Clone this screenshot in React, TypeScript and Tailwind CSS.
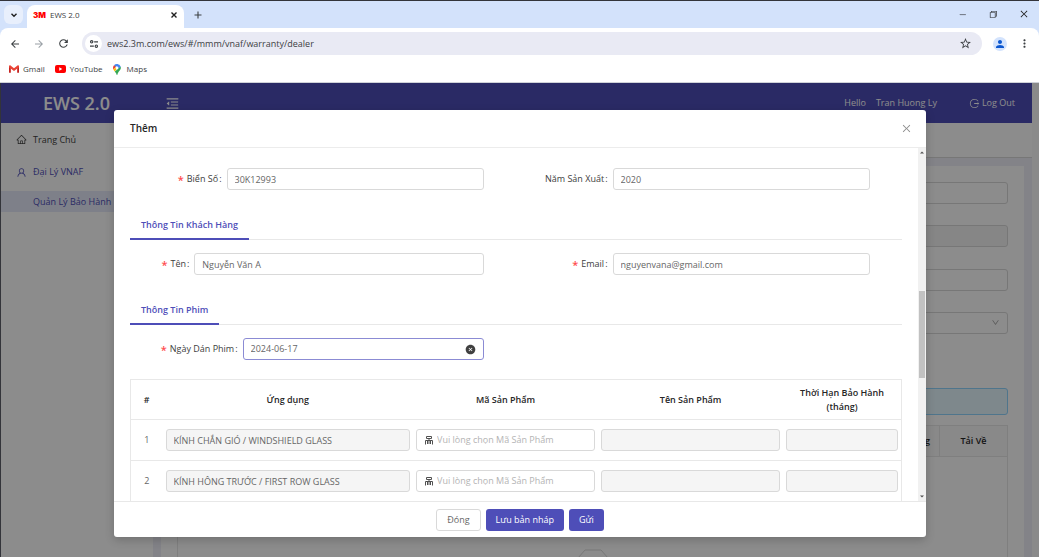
import React, { useState } from "react";
import {
  AiFillCloseCircle,
  AiOutlineClose,
  AiOutlineDown,
  AiOutlineHome,
  AiOutlineLogout,
  AiOutlineMenuFold,
  AiOutlineUser,
} from "react-icons/ai";
import {
  MdArrowBack,
  MdArrowForward,
  MdMoreVert,
  MdOutlineStarBorder,
  MdPerson,
  MdRefresh,
} from "react-icons/md";
import { VscChromeClose, VscChromeMinimize, VscChromeRestore } from "react-icons/vsc";

const inputBase =
  "block h-[22px] w-full min-w-0 rounded-[3px] border border-[#d9d9d9] px-[7px] text-[#666666] outline-none";

function SiteSettingsIcon() {
  return (
    <svg viewBox="0 0 12 12" className="size-[10px]" fill="none" stroke="#3c4043" strokeWidth="1.4">
      <circle cx="3.2" cy="3.4" r="1.4" />
      <path d="M6.2 3.4h4.6M1.2 8.6h4.6" />
      <circle cx="8.8" cy="8.6" r="1.4" />
    </svg>
  );
}

function ProductTreeIcon() {
  return (
    <svg viewBox="0 0 10 10" className="size-[10px] shrink-0" fill="none" stroke="#505050">
      <path d="M2.500 1.500h5v2h-5zM5 3.500v5.500M1.500 9.500V5.500h7V9.500M3.500 5.500v3.500M6.500 5.500v3.500" />
    </svg>
  );
}

function GmailIcon() {
  return (
    <svg viewBox="0 0 22 16" className="h-2 w-[10px]">
      <path d="M0 2v14h4V6z" fill="#c5221f" />
      <path d="M22 2v14h-4V6z" fill="#c5221f" />
      <path d="M0 2C0 0 2 -1 4 1l7 5.5L18 1c2-2 4-1 4 1v2l-11 8.500L0 4z" fill="#ea4335" />
    </svg>
  );
}

function YouTubeIcon() {
  return (
    <svg viewBox="0 0 22 16" className="h-2 w-[11px]">
      <rect width="22" height="16" rx="4" fill="#ff0000" />
      <path d="M8.500 4.500v7l6-3.500z" fill="#fff" />
    </svg>
  );
}

function MapsIcon() {
  return (
    <svg viewBox="0 0 16 22" className="h-[11px] w-2">
      <path d="M8 0a8 8 0 0 1 7.500 5.500L8 14z" fill="#4285f4" />
      <path d="M8 0a8 8 0 0 0-6 2.600L6 7l4-6.700A8 8 0 0 0 8 0z" fill="#4285f4" />
      <path d="M2 2.600A8 8 0 0 0 .8 11L6 6z" fill="#ea4335" />
      <path d="M.8 11c.6 1.400 1.600 2.600 2.700 3.900L11 6 6 6z" fill="#fbbc04" />
      <path d="M15.500 5.500C17 12 10 14 8.700 21.400c-.2.800-1.200.8-1.400 0C6.800 18.600 5 16.700 3.500 14.900z" fill="#34a853" />
      <circle cx="8" cy="8" r="2.800" fill="#fff" />
    </svg>
  );
}

function BrowserChrome() {
  return (
    <div className="shrink-0 bg-[#d3e2fb] text-[#3c4043]">
      <div className="flex h-7 items-end border-t border-[#33343a] pl-1">
        <button aria-label="Search tabs" className="mb-1 flex size-[19px] items-center justify-center rounded-md bg-[#e8effc]">
          <svg viewBox="0 0 8 8" className="size-2" fill="none" stroke="#1f1f1f" strokeWidth="1.4">
            <path d="M1.500 2.800 4 5.300l2.500-2.500" />
          </svg>
        </button>
        <div className="ml-1 flex h-[23px] w-[157px] items-center rounded-t-lg bg-white pr-[6px] pb-[4px] pl-[6px]">
          <span className="font-[Inter] text-[8px] font-black text-[#ff0000]">3M</span>
          <span className="ml-[4px] flex-1 text-[8px]">EWS 2.0</span>
          <button aria-label="Close tab">
            <svg viewBox="0 0 8 8" className="size-2" stroke="#1f1f1f" strokeWidth="1.400">
              <path d="m1.500 1.500 5 5m0-5-5 5" />
            </svg>
          </button>
        </div>
        <button aria-label="New tab" className="mb-[9px] ml-[10px]">
          <svg viewBox="0 0 8 8" className="size-2" stroke="#3c4043" strokeWidth="1.100">
            <path d="M4 .5v7M.5 4h7" />
          </svg>
        </button>
        <div className="mb-[9px] ml-auto flex items-center gap-[21px] pr-[10px] text-[#1f1f1f]">
          <button aria-label="Minimize"><VscChromeMinimize className="size-[9px]" /></button>
          <button aria-label="Restore"><VscChromeRestore className="size-[10px]" /></button>
          <button aria-label="Close window"><VscChromeClose className="size-[10px]" /></button>
        </div>
      </div>
      <div className="flex h-[31px] items-center rounded-t-lg bg-white pl-[9px]">
        <button aria-label="Back"><MdArrowBack className="size-3" /></button>
        <button aria-label="Forward" className="ml-3 text-[#9aa0a6]"><MdArrowForward className="size-3" /></button>
        <button aria-label="Reload" className="ml-3"><MdRefresh className="size-[13px]" /></button>
        <div className="ml-3 flex h-[23px] flex-1 items-center rounded-full bg-[#e9eaf4] pr-[10px] pl-[3px]">
          <span className="flex size-[17px] items-center justify-center rounded-full bg-white">
            <SiteSettingsIcon />
          </span>
          <input
            aria-label="Address"
            defaultValue="ews2.3m.com/ews/#/mmm/vnaf/warranty/dealer"
            className="ml-[5px] min-w-0 flex-1 bg-transparent text-[9px] outline-none"
          />
          <button aria-label="Bookmark"><MdOutlineStarBorder className="size-[13px]" /></button>
        </div>
        <button aria-label="Profile" className="ml-[11px] flex size-[14px] items-center justify-center rounded-full bg-[#d3e3fd] text-[#0b57d0]">
          <MdPerson className="size-3" />
        </button>
        <button aria-label="Menu" className="mr-2 ml-[11px]"><MdMoreVert className="size-[13px]" /></button>
      </div>
      <nav className="flex h-6 items-center gap-[10px] border-b border-[#cfd2d8] bg-white pb-[3px] pl-[9px] text-[8px]">
        <a href="#gmail" className="flex items-center gap-1"><GmailIcon />Gmail</a>
        <a href="#youtube" className="flex items-center gap-1"><YouTubeIcon />YouTube</a>
        <a href="#maps" className="flex items-center gap-[6px]"><MapsIcon />Maps</a>
      </nav>
    </div>
  );
}

function BackgroundPage() {
  return (
    <div className="flex h-full bg-white">
      <div className="flex min-w-0 flex-1 flex-col">
        <header className="flex h-10 shrink-0 items-center bg-[#4e4eb8] text-[9px] text-white">
          <div className="flex w-[153px] justify-center text-[18px] font-semibold">EWS 2.0</div>
          <button aria-label="Collapse menu" className="ml-3">
            <AiOutlineMenuFold className="size-[15px]" />
          </button>
          <span className="ml-auto">Hello</span>
          <span className="ml-[10px]">Tran Huong Ly</span>
          <a href="#logout" className="mr-[17px] ml-8 flex items-center gap-[2px]">
            <AiOutlineLogout className="size-[11px]" />
            Log Out
          </a>
        </header>
        <div className="flex min-h-0 flex-1">
          <nav className="w-[153px] shrink-0 text-[9px] text-[#404040]">
            <a href="#home" className="flex h-[33px] items-center gap-[6px] pl-4">
              <AiOutlineHome className="size-[11px]" />
              Trang Chủ
            </a>
            <a href="#dealer" className="flex h-8 items-center gap-[6px] pl-4 text-[#4e4eb8]">
              <AiOutlineUser className="size-[11px]" />
              Đại Lý VNAF
            </a>
            <a href="#warranty" className="mt-[3px] flex h-[21px] items-center bg-[#e6eafa] pl-[33px] text-[#4e4eb8]">
              Quản Lý Bảo Hành
            </a>
          </nav>
          <main className="flex min-w-0 flex-1 flex-col bg-[#eeeef8] pr-2 pl-2">
            <div className="-mx-2 h-[35px] shrink-0 border-b border-[#d9d9d9] bg-white" />
            <div className="mt-2 flex min-h-0 flex-1 flex-col bg-white px-4 pt-4">
              <div className="flex h-[152px] flex-col justify-between">
                <input aria-label="Số khung" className={`${inputBase}`} />
                <input aria-label="Dòng xe" disabled className={`${inputBase} bg-[#f5f5f5]`} />
                <input aria-label="Số hợp đồng" className={`${inputBase}`} />
                <div className="relative">
                  <select aria-label="Trạng thái" className={`${inputBase} appearance-none`} />
                  <AiOutlineDown className="absolute top-[6px] right-2 size-[9px] text-[#a0a0a0]" />
                </div>
              </div>
              <div className="mt-[54px] h-[27px] shrink-0 rounded-[3px] border border-[#91d5ff] bg-[#e6f7ff]" />
              <div className="mt-[10px] flex min-h-0 flex-1 flex-col border-x border-t border-[#e8e8e8]">
                <div className="flex h-[31px] shrink-0 items-center border-b border-[#e8e8e8] bg-[#fafafa] text-[9px] font-semibold text-[#262626]">
                  <span className="flex-1 pr-[9px] text-right">Nội Dung</span>
                  <span className="flex h-full w-[68px] items-center justify-center border-l border-[#e8e8e8]">Tải Về</span>
                </div>
                <svg viewBox="0 0 32 24" className="mx-auto mt-[92px] h-6 w-8 shrink-0" fill="none" stroke="#d9d9d9">
                  <path d="M1 9 8 1h16l7 8v13H1z" />
                </svg>
              </div>
            </div>
          </main>
        </div>
      </div>
      <div className="w-[7px] shrink-0 bg-[#fcfcfc]" />
    </div>
  );
}

type FieldProps = {
  id: string;
  label: string;
  required?: boolean;
  columns: string;
  children: React.ReactNode;
};

function Field({ id, label, required, columns, children }: FieldProps) {
  return (
    <div className={`grid h-[22px] items-center ${columns}`}>
      <label htmlFor={id} className="flex items-center justify-end pr-[5px] whitespace-nowrap text-[#404040]">
        {required && <span className="mt-px mr-[3px] text-[11px] leading-none font-semibold text-[#ff4d4f]">*</span>}
        {label}
        <span className="ml-px">:</span>
      </label>
      {children}
    </div>
  );
}

function SectionTab({ title }: { title: string }) {
  return (
    <div className="flex h-7 border-b border-[#e8e8e8]">
      <h3 className="-mb-px flex items-center border-b-2 border-[#4e4eb8] px-[11px] font-semibold text-[#4e4eb8]">
        {title}
      </h3>
    </div>
  );
}

const applications = ["KÍNH CHẮN GIÓ / WINDSHIELD GLASS", "KÍNH HÔNG TRƯỚC / FIRST ROW GLASS"];

function FilmTable() {
  return (
    <table className="mt-[19px] w-full table-fixed border-collapse border border-[#e8e8e8]">
      <colgroup>
        <col className="w-8" />
        <col className="w-[32.5%]" />
        <col className="w-[24%]" />
        <col className="w-[24%]" />
        <col />
      </colgroup>
      <thead>
        <tr className="h-10 border-b border-[#e8e8e8] leading-[14px] text-[#262626]">
          <th className="font-semibold">#</th>
          <th className="font-semibold">Ứng dụng</th>
          <th className="font-semibold">Mã Sản Phẩm</th>
          <th className="font-semibold">Tên Sản Phẩm</th>
          <th className="font-semibold">
            Thời Hạn Bảo Hành
            <br />
            (tháng)
          </th>
        </tr>
      </thead>
      <tbody>
        {applications.map((name, i) => (
          <tr key={name} className="h-[41px] border-b border-[#e8e8e8]">
            <td className="text-center text-[#666666]">{i + 1}</td>
            <td className="px-[3px]">
              <input aria-label={`Ứng dụng ${i + 1}`} disabled defaultValue={name} className={`${inputBase} bg-[#f5f5f5]`} />
            </td>
            <td className="px-[3px]">
              <div className="flex h-[22px] items-center gap-[3px] rounded-[3px] border border-[#d9d9d9] bg-white px-[7px]">
                <ProductTreeIcon />
                <input
                  aria-label={`Mã Sản Phẩm ${i + 1}`}
                  placeholder="Vui lòng chọn Mã Sản Phẩm"
                  className="w-full min-w-0 outline-none placeholder:text-[#b4b4b4]"
                />
              </div>
            </td>
            <td className="px-[3px]">
              <input aria-label={`Tên Sản Phẩm ${i + 1}`} disabled className={`${inputBase} bg-[#f5f5f5]`} />
            </td>
            <td className="px-[3px]">
              <input aria-label={`Thời Hạn Bảo Hành ${i + 1}`} disabled className={`${inputBase} bg-[#f5f5f5]`} />
            </td>
          </tr>
        ))}
      </tbody>
    </table>
  );
}

function WarrantyDialog() {
  const [date, setDate] = useState("2024-06-17");
  return (
    <div
      role="dialog"
      aria-labelledby="dialog-title"
      className="flex h-full flex-col overflow-hidden rounded-[3px] bg-white text-[9px] shadow-[0_3px_10px_rgba(0,0,0,0.2)]"
    >
      <div className="flex h-[38px] shrink-0 items-center justify-between border-b border-[#ececec] px-4">
        <h2 id="dialog-title" className="text-[10px] font-semibold text-[#262626]">Thêm</h2>
        <button aria-label="Close" className="text-[#8c8c8c]">
          <AiOutlineClose className="mr-[-2px] size-[11px]" />
        </button>
      </div>
      <div className="flex min-h-0 flex-1">
        <form className="min-w-0 flex-1 overflow-hidden px-4 pt-5">
          <div className="grid grid-cols-2">
            <Field id="plate" label="Biển Số" required columns="grid-cols-[6fr_16fr_2fr]">
              <input id="plate" defaultValue="30K12993" className={inputBase} />
            </Field>
            <Field id="year" label="Năm Sản Xuất" columns="grid-cols-[6fr_16fr_2fr]">
              <input id="year" defaultValue="2020" className={inputBase} />
            </Field>
          </div>
          <div className="mt-[22px]">
            <SectionTab title="Thông Tin Khách Hàng" />
          </div>
          <div className="mt-[13px] grid grid-cols-2">
            <Field id="name" label="Tên" required columns="grid-cols-[4fr_18fr_2fr]">
              <input id="name" defaultValue="Nguyễn Văn A" className={inputBase} />
            </Field>
            <Field id="email" label="Email" required columns="grid-cols-[6fr_16fr_2fr]">
              <input id="email" defaultValue="nguyenvana@gmail.com" className={inputBase} />
            </Field>
          </div>
          <div className="mt-[22px]">
            <SectionTab title="Thông Tin Phim" />
          </div>
          <div className="mt-[13px] grid grid-cols-2">
            <Field id="film-date" label="Ngày Dán Phim" required columns="grid-cols-[7fr_15fr_2fr]">
              <div className="flex h-[22px] items-center rounded-[3px] border border-[#8b8bd4] px-[7px]">
                <input
                  id="film-date"
                  value={date}
                  onChange={(e) => setDate(e.target.value)}
                  className="w-full min-w-0 text-[#666666] outline-none"
                />
                <button type="button" aria-label="Clear date" onClick={() => setDate("")} className="text-[#404040]">
                  <AiFillCloseCircle className="size-[11px]" />
                </button>
              </div>
            </Field>
          </div>
          <FilmTable />
        </form>
        <div className="flex w-2 shrink-0 flex-col items-center justify-between bg-[#f1f1f1] py-[3px]">
          <svg viewBox="0 0 4 3" className="h-[3px] w-1" fill="#505050"><path d="M0 2.500 2 .5l2 2z" /></svg>
          <div className="mt-[19px] h-[87px] w-[6px] bg-[#c1c1c1]" />
          <svg viewBox="0 0 4 3" className="h-[3px] w-1" fill="#505050"><path d="M0 .5h4l-2 2z" /></svg>
        </div>
      </div>
      <div className="flex h-9 shrink-0 items-center justify-center gap-[5px] border-t border-[#e8e8e8]">
        <button className="h-[22px] rounded-[3px] border border-[#d9d9d9] px-[10px] text-[#666666]">Đóng</button>
        <button className="h-[22px] rounded-[3px] bg-[#4e4eb8] px-[10px] text-white">Lưu bản nháp</button>
        <button className="h-[22px] rounded-[3px] bg-[#4e4eb8] px-[10px] text-white">Gửi</button>
      </div>
    </div>
  );
}

export default function App() {
  return (
    <div className="flex h-screen flex-col overflow-hidden font-['Open_Sans','Noto_Sans',sans-serif]">
      <BrowserChrome />
      <div className="relative min-h-0 flex-1">
        <BackgroundPage />
        <div className="absolute inset-0 border-l border-[#33343a] bg-black/45 pt-[27px] pr-[113px] pb-5 pl-[113px]">
          <WarrantyDialog />
        </div>
      </div>
    </div>
  );
}
